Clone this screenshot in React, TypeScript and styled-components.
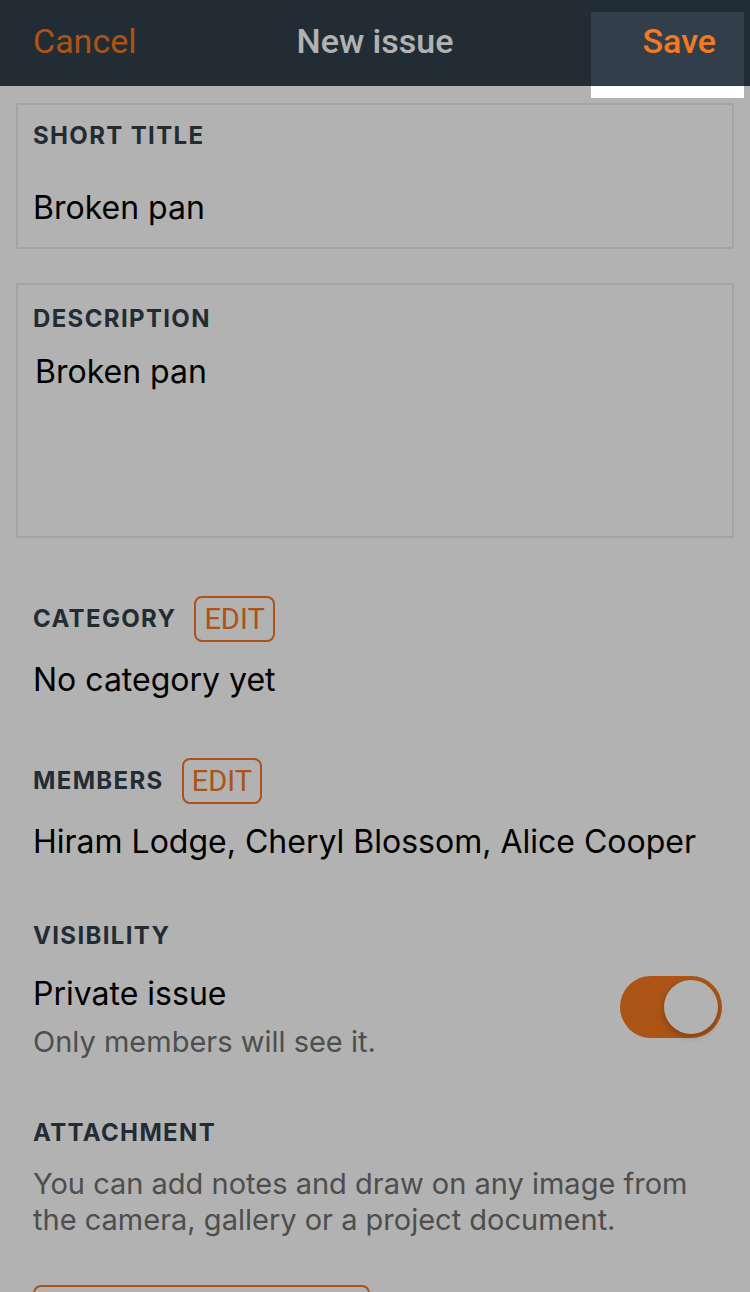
import styled, {createGlobalStyle} from "styled-components";

const GlobalStyle = createGlobalStyle`
  html, body {
    margin: 0;
    padding: 0;
    background: #ffffff;
    overflow: hidden;
  }

  body {
    font-family: "Inter", "Roboto", sans-serif;
    color: #000;
  }
`;

const orange = "#f5791f";
const slate = "#323f4b";

function App() {
    return (
        <Page>
            <GlobalStyle/>
            <Header>
                <HeaderLink>Cancel</HeaderLink>
                <HeaderTitle>New issue</HeaderTitle>
                <HeaderLink $strong>Save</HeaderLink>
            </Header>

            <Content>
                <FieldBox $height={146} $pad={16}>
                    <Label>Short title</Label>
                    <TitleValue>Broken pan</TitleValue>
                </FieldBox>

                <FieldBox $height={255} $pad={19}>
                    <Label>Description</Label>
                    <DescValue>Broken pan</DescValue>
                </FieldBox>

                <Section $top={58}>
                    <LabelRow>
                        <Label>Category</Label>
                        <EditButton>EDIT</EditButton>
                    </LabelRow>
                    <Value>No category yet</Value>
                </Section>

                <Section $top={58}>
                    <LabelRow>
                        <Label>Members</Label>
                        <EditButton>EDIT</EditButton>
                    </LabelRow>
                    <Value>Hiram Lodge, Cheryl Blossom, Alice Cooper</Value>
                </Section>

                <Section $top={59}>
                    <Label>Visibility</Label>
                    <ToggleRow>
                        <div>
                            <Value>Private issue</Value>
                            <Hint>Only members will see it.</Hint>
                        </div>
                        <Toggle>
                            <Knob/>
                        </Toggle>
                    </ToggleRow>
                </Section>

                <Section $top={58}>
                    <Label>Attachment</Label>
                    <Note>
                        You can add notes and draw on any image from
                        the camera, gallery or a project document.
                    </Note>
                    <AddButton/>
                </Section>
            </Content>

            <Spotlight/>
        </Page>
    );
}

const Page = styled.div`
  position: relative;
  width: 750px;
  height: 1292px;
  overflow: hidden;
  background: #ffffff;
`;

const Header = styled.header`
  box-sizing: border-box;
  height: 86px;
  background: ${slate};
  display: flex;
  align-items: center;
  justify-content: space-between;
  padding: 0 34px 4px 33px;
  font-family: "Roboto", sans-serif;
`;

const HeaderLink = styled.span<{ $strong?: boolean }>`
  font-size: 34px;
  font-weight: ${p => p.$strong ? 500 : 400};
  color: ${orange};
`;

const HeaderTitle = styled.span`
  position: absolute;
  left: 0;
  right: 0;
  text-align: center;
  pointer-events: none;
  font-size: 34px;
  font-weight: 500;
  color: #ffffff;
`;

const Content = styled.div`
  padding: 17px 16px 0;
`;

const FieldBox = styled.div<{ $height: number, $pad: number }>`
  box-sizing: border-box;
  height: ${p => p.$height}px;
  border: 2px solid #ebebeb;
  padding: ${p => p.$pad}px 15px 0;
  margin-bottom: 34px;
`;

const Label = styled.div`
  font-family: "Inter", sans-serif;
  font-size: 24px;
  font-weight: 700;
  letter-spacing: 1.35px;
  text-transform: uppercase;
  color: ${slate};
  line-height: 30px;
`;

const TitleValue = styled.div`
  margin-top: 37px;
  font-size: 32px;
  line-height: 40px;
`;

const DescValue = styled.div`
  margin-top: 18px;
  padding-left: 2px;
  font-size: 32px;
  line-height: 40px;
`;

const Section = styled.section<{ $top: number }>`
  padding: 0 17px;
  margin-top: ${p => p.$top}px;
`;

const LabelRow = styled.div`
  display: flex;
  align-items: center;
  gap: 18px;
`;

const EditButton = styled.span`
  box-sizing: border-box;
  height: 46px;
  padding: 0 8px;
  display: inline-flex;
  align-items: center;
  border: 2px solid ${orange};
  border-radius: 8px;
  font-family: "Roboto", sans-serif;
  font-size: 29px;
  color: ${orange};
`;

const Value = styled.div`
  margin-top: 18px;
  font-size: 32px;
  line-height: 40px;
`;

const ToggleRow = styled.div`
  display: flex;
  align-items: flex-start;
  justify-content: space-between;

  ${Value} {
    margin-top: 23px;
  }
`;

const Hint = styled.div`
  margin-top: 10px;
  font-size: 29px;
  line-height: 36px;
  color: #707070;
`;

const Toggle = styled.div`
  margin-top: 25px;
  margin-right: -5px;
  width: 102px;
  height: 62px;
  border-radius: 31px;
  background: ${orange};
  position: relative;
`;

const Knob = styled.div`
  position: absolute;
  right: 4px;
  top: 4px;
  width: 54px;
  height: 54px;
  border-radius: 50%;
  background: #ffffff;
  box-shadow: 0 3px 6px rgba(0, 0, 0, 0.25);
`;

const Note = styled.p`
  margin: 18px 0 0;
  font-size: 29px;
  line-height: 36px;
  color: #707070;
`;

const AddButton = styled.div`
  margin-top: 47px;
  width: 337px;
  height: 90px;
  box-sizing: border-box;
  border: 2px solid ${orange};
  border-radius: 8px;
`;

const Spotlight = styled.div`
  position: absolute;
  left: 591px;
  top: 12px;
  width: 153px;
  height: 86px;
  box-shadow: 0 0 0 2000px rgba(0, 0, 0, 0.3);
  pointer-events: none;
`;

export default App;
